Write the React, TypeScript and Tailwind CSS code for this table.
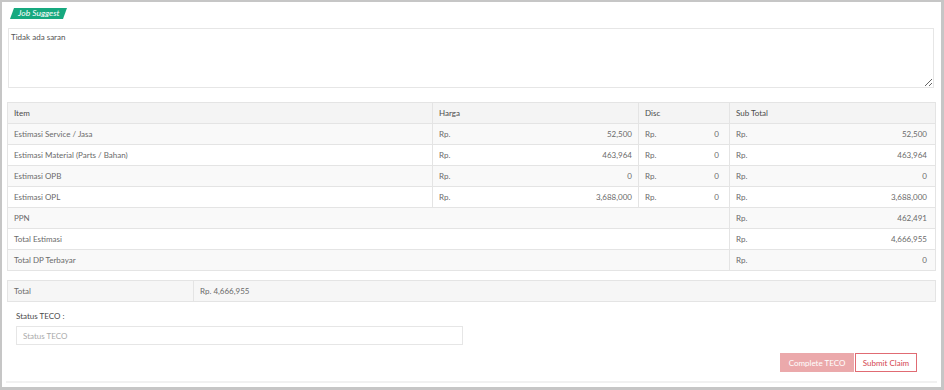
interface Line {
  label: string;
  harga: string;
  disc: string;
  sub: string;
}

const lines: Line[] = [
  { label: "Estimasi Service / Jasa", harga: "52,500", disc: "0", sub: "52,500" },
  { label: "Estimasi Material (Parts / Bahan)", harga: "463,964", disc: "0", sub: "463,964" },
  { label: "Estimasi OPB", harga: "0", disc: "0", sub: "0" },
  { label: "Estimasi OPL", harga: "3,688,000", disc: "0", sub: "3,688,000" },
];

const summary = [
  { label: "PPN", value: "462,491" },
  { label: "Total Estimasi", value: "4,666,955" },
  { label: "Total DP Terbayar", value: "0" },
];

const cell = "border border-[#e4e4e4] h-[21px] px-[6px] align-middle";

const Money = ({ value, right = "pr-0" }: { value: string; right?: string }) => (
  <div className={`flex justify-between ${right}`}>
    <span>Rp.</span>
    <span>{value}</span>
  </div>
);

const App: React.FC = () => {
  return (
    <div className="w-[944px] h-[390px] bg-white font-['Lato',sans-serif] text-[8px] text-[#6a6a6a]">
      <div className="h-full border-l-2 border-t-2 border-r-[3px] border-b-[3px] border-[#c6c6c6] flex flex-col">
        <div className="flex-1 px-[4px] pt-[6px] flex flex-col">
          <div className="pl-[6px] h-[11px]">
            <div className="w-[53px] h-[11px] bg-[#17a97f] -skew-x-[20deg] flex items-center justify-center">
              <span className="skew-x-[20deg] italic text-white text-[8.5px] leading-none">Job Suggest</span>
            </div>
          </div>

          <textarea
            readOnly
            value="Tidak ada saran"
            className="mt-[9px] ml-[2px] w-[926px] h-[60px] border border-[#e6e6e6] px-[2px] py-[2px] text-[8px] text-[#555] outline-none resize"
          />

          <table className="mt-[14px] ml-[1px] w-[929px] border-collapse">
            <thead>
              <tr className="bg-[#f4f4f4] text-[#4a4a4a]">
                <th className={`${cell} w-[425px] text-left font-normal`}>Item</th>
                <th className={`${cell} w-[206px] text-left font-normal`}>Harga</th>
                <th className={`${cell} w-[91px] text-left font-normal`}>Disc</th>
                <th className={`${cell} text-left font-normal`}>Sub Total</th>
              </tr>
            </thead>
            <tbody>
              {lines.map((l, i) => (
                <tr key={l.label} className={i % 2 === 0 ? "bg-[#f9f9f9]" : "bg-white"}>
                  <td className={cell}>{l.label}</td>
                  <td className={cell}>
                    <Money value={l.harga} />
                  </td>
                  <td className={cell}>
                    <Money value={l.disc} right="pr-[4px]" />
                  </td>
                  <td className={cell}>
                    <Money value={l.sub} right="pr-[2px]" />
                  </td>
                </tr>
              ))}
              {summary.map((s, i) => (
                <tr key={s.label} className={i % 2 === 0 ? "bg-[#f9f9f9]" : "bg-white"}>
                  <td className={cell} colSpan={3}>
                    {s.label}
                  </td>
                  <td className={cell}>
                    <Money value={s.value} right="pr-[2px]" />
                  </td>
                </tr>
              ))}
            </tbody>
          </table>

          <table className="mt-[9px] ml-[1px] w-[929px] border-collapse">
            <tbody>
              <tr className="bg-[#f6f6f6]">
                <td className={`${cell} w-[186px]`}>Total</td>
                <td className={cell}>Rp. 4,666,955</td>
              </tr>
            </tbody>
          </table>

          <div className="ml-[10px] mt-[9px] text-[#4a4a4a] leading-[10px]">Status TECO :</div>
          <input
            readOnly
            placeholder="Status TECO"
            className="ml-[10px] mt-[5px] w-[447px] h-[19px] border border-[#e6e6e6] px-[6px] text-[8px] placeholder:text-[#aaa] outline-none"
          />

          <div className="flex justify-end mt-[8px] pr-[20px]">
            <button className="w-[74px] h-[19px] bg-[#eba9ab] text-white text-[8px]">Complete TECO</button>
            <button className="ml-px w-[62px] h-[19px] border border-[#e06b73] bg-white text-[#d4454f] text-[8px]">
              Submit Claim
            </button>
          </div>
        </div>
        <div className="mx-[4px] mb-[4px] h-[2px] bg-[#f1f1f1]" />
      </div>
    </div>
  );
};

export default App;
